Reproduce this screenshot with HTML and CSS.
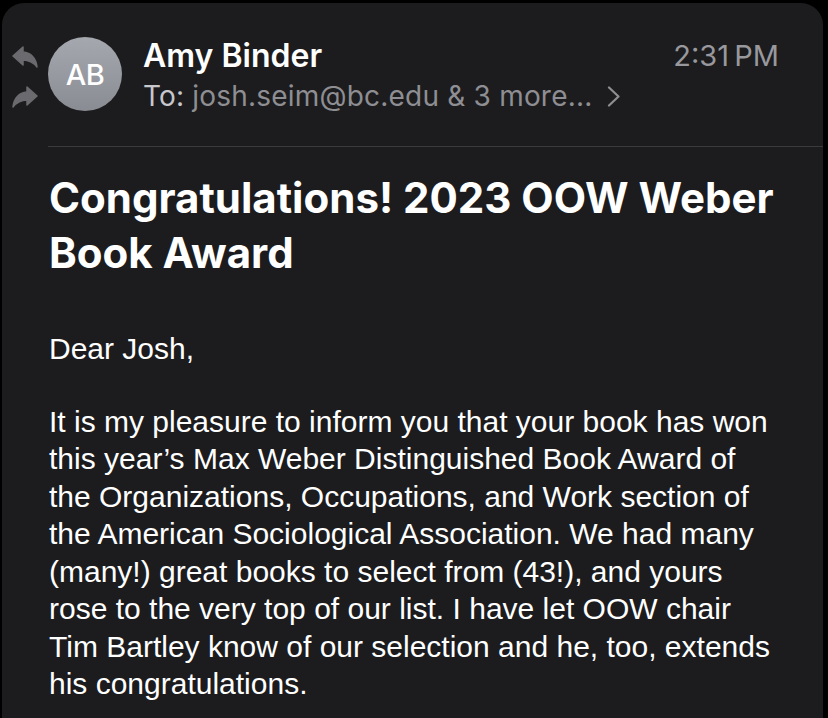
FILE: index.html
```html
<!DOCTYPE html>
<html lang="en">
<head>
<meta charset="utf-8">
<title>Congratulations! 2023 OOW Weber Book Award</title>
<link rel="stylesheet" href="styles.css">
</head>
<body>
<div class="card">
  <header class="head">
    <div class="actions">
      <svg class="act" viewBox="0 0 26 22" width="26" height="22" aria-hidden="true">
        <path d="M11 1 L1 10 L11 19 L11 14 C17 14 21 16 25 21 C24 13 20 7 11 6 Z" fill="#6b6b6f" stroke="#6b6b6f" stroke-width="1.5" stroke-linejoin="round"/>
      </svg>
      <svg class="act" viewBox="0 0 26 22" width="26" height="22" aria-hidden="true">
        <path d="M15 1 L25 10 L15 19 L15 14 C9 14 5 16 1 21 C2 13 6 7 15 6 Z" fill="#6b6b6f" stroke="#6b6b6f" stroke-width="1.5" stroke-linejoin="round"/>
      </svg>
    </div>
    <div class="avatar">AB</div>
    <div class="who">
      <div class="from">Amy Binder</div>
      <div class="to"><span class="to-label">To:</span> <span class="to-addr">josh.seim@bc.edu &amp; 3 more...</span>
        <svg class="chev" viewBox="0 0 15 21" width="15" height="21" aria-hidden="true"><path d="M3 1.5 L12.5 10.5 L3 19.5" fill="none" stroke="#8e8e93" stroke-width="2.2" stroke-linecap="round" stroke-linejoin="round"/></svg>
      </div>
    </div>
    <div class="time">2:31&#8201;PM</div>
  </header>
  <div class="divider"></div>
  <main class="content">
    <h1 class="subject">Congratulations! 2023 OOW Weber Book Award</h1>
    <p class="para first">Dear Josh,</p>
    <p class="para">It is my pleasure to inform you that your book has won this year’s Max Weber Distinguished Book Award of the Organizations, Occupations, and Work section of the American Sociological Association. We had many (many!) great books to select from (43!), and yours rose to the very top of our list. I have let OOW chair Tim Bartley know of our selection and he, too, extends his congratulations.</p>
  </main>
</div>
</body>
</html>
```
FILE: styles.css
```css
html, body {
  margin: 0;
  padding: 0;
  background: #000;
  height: 100%;
  overflow: hidden;
}
.card {
  margin: 3px 5px 0 2px;
  background: #1c1c1e;
  border-radius: 22px 22px 0 0;
  min-height: 715px;
  box-sizing: border-box;
  font-family: Inter, "Liberation Sans", sans-serif;
  color: #fff;
}
.head {
  display: flex;
  align-items: flex-start;
  padding: 34px 44px 0 0;
}
.actions {
  display: flex;
  flex-direction: column;
  gap: 18px;
  width: 26px;
  margin: 9px 0 0 10px;
}
.act { display: block; }
.avatar {
  width: 74px;
  height: 74px;
  border-radius: 50%;
  margin-left: 10px;
  background: linear-gradient(#a6a8af, #8a8c93);
  color: #fff;
  display: flex;
  align-items: center;
  justify-content: center;
  font-size: 29px;
  font-weight: 500;
  letter-spacing: -0.5px;
  flex: none;
}
.who {
  flex: 1;
  margin-left: 21px;
}
.from {
  font-size: 32px;
  font-weight: 600;
  line-height: 38px;
}
.to {
  margin-top: 4px;
  font-size: 28px;
  line-height: 34px;
  letter-spacing: 0.2px;
  display: flex;
  align-items: center;
  gap: 8px;
}
.to-label { color: #c7c7cc; }
.to-addr { color: #8e8e93; }
.chev { margin-left: 6px; }
.time {
  font-size: 29px;
  line-height: 38px;
  color: #98989d;
}
.divider {
  height: 1px;
  background: #3a3a3c;
  margin: 33px 0 0 46px;
}
.content {
  padding: 0 40px 0 47px;
}
.subject {
  margin: 23px 0 0;
  font-size: 42px;
  line-height: 55px;
  font-weight: 700;
}
.para {
  margin: 35px 0 0;
  font-family: "Liberation Sans", Arial, sans-serif;
  font-size: 30px;
  line-height: 37.5px;
  color: #fff;
}
.para.first {
  margin-top: 50px;
}
```
